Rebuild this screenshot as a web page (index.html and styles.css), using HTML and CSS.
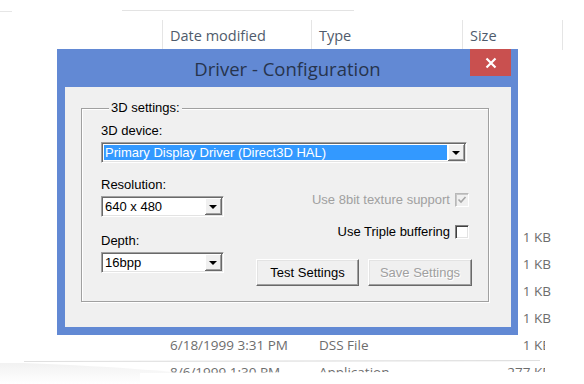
FILE: index.html
```html
<!DOCTYPE html>
<html>
<head>
<meta charset="utf-8">
<link rel="stylesheet" href="styles.css">
</head>
<body>
<div class="screen">
  <div class="explorer">
    <div class="topbar"><span class="mark"></span><span class="topline"></span></div>
    <div class="header">
      <div class="hcell date">Date modified</div>
      <div class="hcell type">Type</div>
      <div class="hcell size">Size</div>
      <div class="hcell end"></div>
    </div>
    <div class="rows">
      <div class="row"><span class="c-date"></span><span class="c-type"></span><span class="c-size">1 KB</span></div>
      <div class="row"><span class="c-date"></span><span class="c-type"></span><span class="c-size">1 KB</span></div>
      <div class="row"><span class="c-date"></span><span class="c-type"></span><span class="c-size">1 KB</span></div>
      <div class="row"><span class="c-date"></span><span class="c-type"></span><span class="c-size">1 KB</span></div>
      <div class="row"><span class="c-date">6/18/1999 3:31 PM</span><span class="c-type">DSS File</span><span class="c-size">1 KB</span></div>
      <div class="row"><span class="c-date">8/6/1999 1:30 PM</span><span class="c-type">Application</span><span class="c-size">277 KB</span></div>
    </div>
  </div>

  <svg class="curl" width="584" height="54" viewBox="0 0 584 54">
    <defs>
      <linearGradient id="sh" x1="0" y1="0" x2="0" y2="1">
        <stop offset="0" stop-color="#ececec"/>
        <stop offset="1" stop-color="#ffffff"/>
      </linearGradient>
    </defs>
    <rect x="545" y="2" width="39" height="52" fill="#ffffff"/>
    <path d="M0,54 L0,33 L24,33 C120,37 200,42 260,54 Z" fill="url(#sh)" opacity="0.7"/>
    <path d="M24,31.5 L540,30.5" stroke="#e0e0e0" stroke-width="1.2" fill="none"/>
    <path d="M140,43 C300,42 450,42 584,42 L584,54 L140,54 Z" fill="#ffffff"/>
  </svg>

  <div class="dialog">
    <div class="titlebar">
      <span class="title">Driver - Configuration</span>
      <span class="close"><svg width="12" height="12" viewBox="0 0 12 12"><path d="M1.5,1.5 L10.5,10.5 M10.5,1.5 L1.5,10.5" stroke="#ffffff" stroke-width="2.2" fill="none"/></svg></span>
    </div>
    <div class="client">
      <fieldset class="group">
        <legend>3D settings:</legend>
        <div class="label">3D device:</div>
        <div class="combo wide"><span class="value selected">Primary Display Driver (Direct3D HAL)</span><span class="arrow"><i></i></span></div>
        <div class="lower">
          <div class="col-left">
            <div class="label res">Resolution:</div>
            <div class="combo small"><span class="value">640 x 480</span><span class="arrow"><i></i></span></div>
            <div class="label depth">Depth:</div>
            <div class="combo small"><span class="value">16bpp</span><span class="arrow"><i></i></span></div>
          </div>
          <div class="col-right">
            <div class="check disabled first"><span class="ctext">Use 8bit texture support</span><span class="box"><svg width="10" height="10" viewBox="0 0 10 10"><path d="M1.5,4.5 L4,7 L8.5,2" stroke="#a6a6a6" stroke-width="1.6" fill="none"/></svg></span></div>
            <div class="check second"><span class="ctext">Use Triple buffering</span><span class="box"></span></div>
            <div class="buttons">
              <button class="btn">Test Settings</button>
              <button class="btn" disabled>Save Settings</button>
            </div>
          </div>
        </div>
      </fieldset>
    </div>
  </div>
</div>
</body>
</html>
```
FILE: styles.css
```css
html, body {
  margin: 0;
  padding: 0;
  background: #ffffff;
}
.screen {
  position: relative;
  width: 584px;
  height: 384px;
  overflow: hidden;
  background: #ffffff;
}
.explorer {
  font-family: "Open Sans", "Noto Sans", sans-serif;
  font-size: 13.5px;
  color: #6d6d6d;
}
.topbar {
  height: 20px;
  display: flex;
  align-items: flex-start;
}
.mark {
  width: 12px;
  height: 1px;
  margin-top: 11px;
  background: #e6e6e6;
}
.topline {
  width: 232px;
  height: 1px;
  margin-top: 10px;
  margin-left: 110px;
  background: #e3e3e3;
}
.header {
  display: flex;
  height: 30px;
  padding-left: 162px;
}
.hcell {
  border-left: 1px solid #e5e5e5;
  box-sizing: border-box;
  padding-left: 7px;
  line-height: 32px;
  color: #4f5b6c;
  font-size: 14.5px;
}
.hcell.date { width: 149px; }
.hcell.type { width: 151px; }
.hcell.size { width: 100px; }
.hcell.end { width: 20px; }
.rows {
  margin-top: 174px;
}
.row {
  display: flex;
  height: 27px;
  line-height: 27px;
  padding-left: 170px;
}
.c-date { width: 149px; }
.c-type { width: 136px; }
.c-size { width: 96px; text-align: right; }

.curl {
  position: absolute;
  left: 0;
  top: 330px;
}

.dialog {
  position: absolute;
  left: 57px;
  top: 49px;
  width: 461px;
  height: 286px;
  background: #6289d4;
  display: flex;
  flex-direction: column;
  font-family: "Liberation Sans", Arial, sans-serif;
  font-size: 13px;
  color: #000000;
}
.titlebar {
  position: relative;
  height: 38px;
  display: flex;
  align-items: center;
  justify-content: center;
}
.title {
  font-family: "Open Sans", "Noto Sans", sans-serif;
  font-size: 18.5px;
  color: #27344d;
  margin-top: 1px;
}
.close {
  position: absolute;
  right: 7px;
  top: 0;
  width: 41px;
  height: 27px;
  background: #c9504f;
  display: flex;
  align-items: center;
  justify-content: center;
}
.client {
  flex: 1;
  margin: 0 7px 8px 8px;
  background: #f0f0f0;
  padding: 14px 22px 25px 16px;
  display: flex;
  flex-direction: column;
}
.group {
  flex: 1;
  margin: 0;
  min-width: 0;
  border: 1px solid #a0a0a0;
  box-shadow: inset 1px 1px 0 #ffffff, 1px 1px 0 #ffffff;
  padding: 8px 19px 0 19px;
}
.group legend {
  margin-left: 8px;
  padding: 0 2px;
  line-height: 14px;
  background: #f0f0f0;
}
.label {
  line-height: 15px;
}
.combo {
  display: flex;
  height: 21px;
  box-sizing: border-box;
  background: #ffffff;
  border: 1px solid;
  border-color: #a0a0a0 #ffffff #ffffff #a0a0a0;
  box-shadow: inset 1px 1px 0 #696969, inset -1px -1px 0 #e3e3e3;
  padding: 1px;
}
.combo.wide {
  margin-top: 4px;
  margin-right: 2px;
}
.combo.small {
  width: 123px;
  margin-top: 3px;
}
.value {
  flex: 1;
  line-height: 17px;
  padding-left: 2px;
  white-space: nowrap;
  overflow: hidden;
}
.value.selected {
  background: #3399ff;
  color: #ffffff;
  margin: 1px;
  line-height: 15px;
  padding-left: 1px;
}
.arrow {
  width: 17px;
  height: 17px;
  background: #f0f0f0;
  box-shadow: inset -1px -1px 0 #696969, inset 1px 1px 0 #ffffff, inset -2px -2px 0 #a0a0a0;
  display: flex;
  align-items: center;
  justify-content: center;
}
.arrow i {
  width: 0;
  height: 0;
  border-left: 4px solid transparent;
  border-right: 4px solid transparent;
  border-top: 4px solid #000000;
  margin-left: -1px;
  margin-top: 1px;
}
.lower {
  display: flex;
  justify-content: space-between;
}
.col-left {
  display: flex;
  flex-direction: column;
}
.label.res {
  margin-top: 14px;
  line-height: 16px;
}
.label.depth {
  margin-top: 16px;
  line-height: 16px;
}
.col-right {
  display: flex;
  flex-direction: column;
  align-items: flex-end;
}
.check {
  display: flex;
  align-items: center;
  gap: 5px;
  height: 14px;
  line-height: 14px;
}
.check.first { margin-top: 30px; }
.check.second { margin-top: 18px; }
.check.disabled .ctext { color: #a0a0a0; }
.box {
  width: 14px;
  height: 14px;
  box-sizing: border-box;
  background: #ffffff;
  border: 1px solid;
  border-color: #808080 #ffffff #ffffff #808080;
  box-shadow: inset 1px 1px 0 #404040, inset -1px -1px 0 #e3e3e3;
  display: flex;
  align-items: center;
  justify-content: center;
}
.check.disabled .box {
  background: #f0f0f0;
  border-color: #b8b8b8 #ffffff #ffffff #b8b8b8;
  box-shadow: inset 1px 1px 0 #c8c8c8;
}
.buttons {
  display: flex;
  gap: 9px;
  margin-top: 20px;
  margin-right: -3px;
}
.btn {
  font-family: "Liberation Sans", Arial, sans-serif;
  font-size: 13px;
  color: #000000;
  height: 27px;
  width: 103px;
  padding: 0;
  background: #f0f0f0;
  border: 1px solid;
  border-color: #ffffff #696969 #696969 #ffffff;
  box-shadow: inset -1px -1px 0 #a0a0a0, inset 1px 1px 0 #e3e3e3;
}
.btn + .btn { width: 104px; }
.btn:disabled {
  color: #a0a0a0;
  text-shadow: 1px 1px 0 #ffffff;
}
```
